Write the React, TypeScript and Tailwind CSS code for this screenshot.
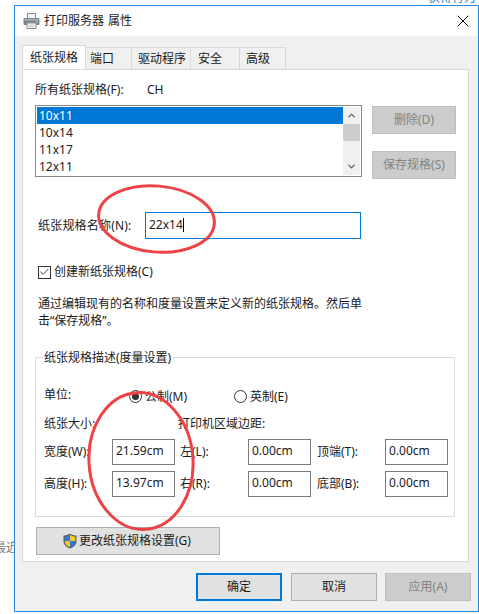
import { ChevronDown, ChevronUp, Check, X } from 'lucide-react';

const sizes = ['10x11', '10x14', '11x17', '12x11'];

const PrinterIcon = () => (
    <svg width="17" height="16" viewBox="0 0 17 16">
        <rect x="4.5" y="0.5" width="8" height="5" fill="#f4f4f4" stroke="#8b8f94" />
        <rect x="0.5" y="5" width="16" height="7" rx="1" fill="#7d858c" />
        <rect x="1.5" y="6" width="14" height="1.5" fill="#a9b0b6" />
        <circle cx="14" cy="9" r="0.8" fill="#d8e4ee" />
        <rect x="4" y="10" width="9" height="5.5" fill="#ffffff" stroke="#8b8f94" />
        <path d="M5.5 12h6M5.5 13.8h6" stroke="#b9bec3" />
    </svg>
);

const ShieldIcon = () => (
    <svg width="14" height="16" viewBox="0 0 14 16">
        <path d="M7 0.5C5 2 3 2.6 0.5 2.6V8c0 3.6 2.6 6 6.5 7.5 3.9-1.5 6.5-3.9 6.5-7.5V2.6C11 2.6 9 2 7 0.5z" fill="#59595c" />
        <path d="M7 1.8V8H1.6V3.6C3.6 3.5 5.4 3 7 1.8z" fill="#2a7fd4" />
        <path d="M7 1.8c1.6 1.2 3.4 1.7 5.4 1.8V8H7z" fill="#f8c632" />
        <path d="M1.6 8H7v6.2C3.8 13 1.6 11 1.6 8z" fill="#f8c632" />
        <path d="M7 8h5.4c0 3-2.2 5-5.4 6.2z" fill="#2a7fd4" />
    </svg>
);

const Field = ({ value }: { value: string }) => (
    <div className="w-[63px] h-[26px] border border-[#7a7a7a] bg-white pl-[3px] pb-[2px] flex items-center shrink-0">
        {value}
    </div>
);

const Radio = ({ on = false }: { on?: boolean }) => (
    <div className="w-[13px] h-[13px] rounded-full border border-[#333333] bg-white flex items-center justify-center shrink-0">
        {on && <div className="w-[7px] h-[7px] rounded-full bg-[#333333]" />}
    </div>
);

const MeasureRow = ({ a, b, c, d, e }: { a: string; b: string; c: string; d: string; e: string }) => (
    <div className="flex items-center h-[26px]">
        <div className="w-[68px] shrink-0">{a}</div>
        <Field value={b} />
        <div className="w-[73px] pl-[5px] shrink-0">{c}</div>
        <Field value="0.00cm" />
        <div className="w-[74px] pl-[6px] shrink-0">{d}</div>
        <Field value={e} />
    </div>
);

export default function App() {
    return (
        <div className="relative w-[479px] h-[614px] overflow-hidden bg-white pt-[5px] pl-[14px] text-[12px] leading-[16px] text-[#1a1a1a] font-['Noto_Sans','Noto_Sans_CJK_SC',sans-serif]">
            {/* page behind the dialog */}
            <div className="absolute top-[-10px] left-[428px] text-[#2b7cd3] whitespace-nowrap">获得行为</div>
            <div className="absolute top-[540px] left-[-6px] text-[#777777] whitespace-nowrap">最近</div>

            <div className="relative w-[465px] h-[607px] border border-[#2b88d8] bg-[#f0f0f0] flex flex-col">
                {/* Title bar */}
                <div className="h-[30px] bg-white flex items-center pl-[8px] shrink-0">
                    <PrinterIcon />
                    <span className="ml-[4px] text-[#222222] [word-spacing:1px]">打印服务器 属性</span>
                    <X className="ml-auto mr-[5px] text-black" size={20} strokeWidth={1.2} />
                </div>

                <div className="flex-1 pl-[7px] pt-[9px] pr-[7px]">
                    {/* Tabs */}
                    <div className="flex items-end h-[24px]">
                        <div className="w-[64px] h-[24px] bg-white border border-b-0 border-[#d9d9d9] flex items-center justify-center">纸张规格</div>
                        <div className="w-[46px] h-[22px] border-t border-r border-[#d9d9d9] pl-[4px] flex items-center">端口</div>
                        <div className="w-[59px] h-[22px] border-t border-r border-[#d9d9d9] pl-[6px] flex items-center">驱动程序</div>
                        <div className="w-[49px] h-[22px] border-t border-r border-[#d9d9d9] pl-[7px] flex items-center">安全</div>
                        <div className="w-[46px] h-[22px] border-t border-r border-[#d9d9d9] pl-[6px] flex items-center">高级</div>
                    </div>

                    {/* Panel */}
                    <div className="w-[447px] h-[493px] bg-white border border-[#d9d9d9] pl-[12px]">
                        <div className="flex mt-[12px] h-[16px]">
                            <div className="w-[112px]">所有纸张规格(F):</div>
                            <div>CH</div>
                        </div>

                        <div className="flex mt-[7px] h-[72px]">
                            <div className="w-[327px] h-[72px] border border-[#82878c] p-[1px] flex shrink-0">
                                <div className="flex-1">
                                    {sizes.map((s, i) => (
                                        <div key={s} className={`h-[17px] pl-[2px] leading-[17px] ${i === 0 ? 'bg-[#0078d7] text-white' : ''}`}>
                                            {s}
                                        </div>
                                    ))}
                                </div>
                                <div className="w-[17px] bg-[#f0f0f0] flex flex-col">
                                    <div className="h-[17px] flex items-center justify-center">
                                        <ChevronUp size={11} strokeWidth={3} className="text-[#606060]" />
                                    </div>
                                    <div className="h-[17px] bg-[#cdcdcd]" />
                                    <div className="flex-1" />
                                    <div className="h-[17px] flex items-center justify-center">
                                        <ChevronDown size={11} strokeWidth={3} className="text-[#606060]" />
                                    </div>
                                </div>
                            </div>
                            <div className="ml-[10px] mt-[1px] flex flex-col gap-[17px]">
                                <button className="w-[84px] h-[28px] shrink-0 bg-[#cccccc] border border-[#bfbfbf] text-[#838383]">删除(D)</button>
                                <button className="w-[84px] h-[28px] shrink-0 bg-[#cccccc] border border-[#bfbfbf] text-[#838383]">保存规格(S)</button>
                            </div>
                        </div>

                        <div className="flex items-center mt-[35px] pl-[3px]">
                            <div className="w-[107px] tracking-[0.2px]">纸张规格名称(N):</div>
                            <div className="w-[216px] h-[27px] border border-[#0078d7] pl-[3px] pb-[2px] flex items-center">
                                22x14
                                <div className="w-px h-[14px] bg-black" />
                            </div>
                        </div>

                        <div className="flex items-center mt-[26px] pl-[3px] h-[14px]">
                            <div className="w-[13px] h-[13px] border border-[#333333] flex items-center justify-center">
                                <Check size={12} strokeWidth={2} className="text-[#333333]" />
                            </div>
                            <span className="ml-[3px]">创建新纸张规格(C)</span>
                        </div>

                        <div className="mt-[16px] pl-[3px] leading-[17px] w-[410px]">
                            <div className="whitespace-nowrap">通过编辑现有的名称和度量设置来定义新的纸张规格。然后单</div>
                            <div>击“保存规格”。</div>
                        </div>

                        {/* Group */}
                        <div className="relative mt-[28px] w-[420px] h-[160px] border border-[#dcdcdc] pl-[8px]">
                            <div className="absolute top-[-8px] left-[7px] bg-white px-[1px]">纸张规格描述(度量设置)</div>
                            <div className="flex items-center mt-[29px] h-[16px]">
                                <div className="w-[85px]">单位:</div>
                                <div className="flex items-center w-[105px] mt-[3px]">
                                    <Radio on />
                                    <span className="ml-[3px]">公制(M)</span>
                                </div>
                                <div className="flex items-center mt-[3px]">
                                    <Radio />
                                    <span className="ml-[3px]">英制(E)</span>
                                </div>
                            </div>
                            <div className="flex mt-[13px] h-[16px]">
                                <div className="w-[134px]">纸张大小:</div>
                                <div>打印机区域边距:</div>
                            </div>
                            <div className="flex flex-col gap-[6px] mt-[7px]">
                                <MeasureRow a="宽度(W):" b="21.59cm" c="左(L):" d="顶端(T):" e="0.00cm" />
                                <MeasureRow a="高度(H):" b="13.97cm" c="右(R):" d="底部(B):" e="0.00cm" />
                            </div>
                        </div>

                        <button className="mt-[10px] ml-[1px] w-[184px] h-[28px] bg-[#e1e1e1] border border-[#adadad] flex items-center pl-[26px]">
                            <ShieldIcon />
                            <span className="ml-[2px]">更改纸张规格设置(G)</span>
                        </button>
                    </div>

                    {/* Dialog buttons */}
                    <div className="flex mt-[11px] ml-[174px]">
                        <button className="w-[86px] h-[28px] bg-[#e1e1e1] border-2 border-[#0078d7]">确定</button>
                        <button className="ml-[9px] w-[86px] h-[28px] bg-[#e1e1e1] border border-[#adadad]">取消</button>
                        <button className="ml-[8px] w-[86px] h-[28px] bg-[#cccccc] border border-[#bfbfbf] text-[#838383]">应用(A)</button>
                    </div>
                </div>
            </div>

            {/* Red hand-drawn annotation */}
            <svg className="absolute left-0 top-0 pointer-events-none" width="479" height="614">
                <ellipse cx="156.5" cy="219" rx="58" ry="33" transform="rotate(5 156.5 219)" fill="none" stroke="#ef4146" strokeWidth="3" />
                <ellipse cx="141" cy="461" rx="52" ry="68.5" transform="rotate(-4 141 461)" fill="none" stroke="#ef4146" strokeWidth="3" />
            </svg>
        </div>
    );
}
